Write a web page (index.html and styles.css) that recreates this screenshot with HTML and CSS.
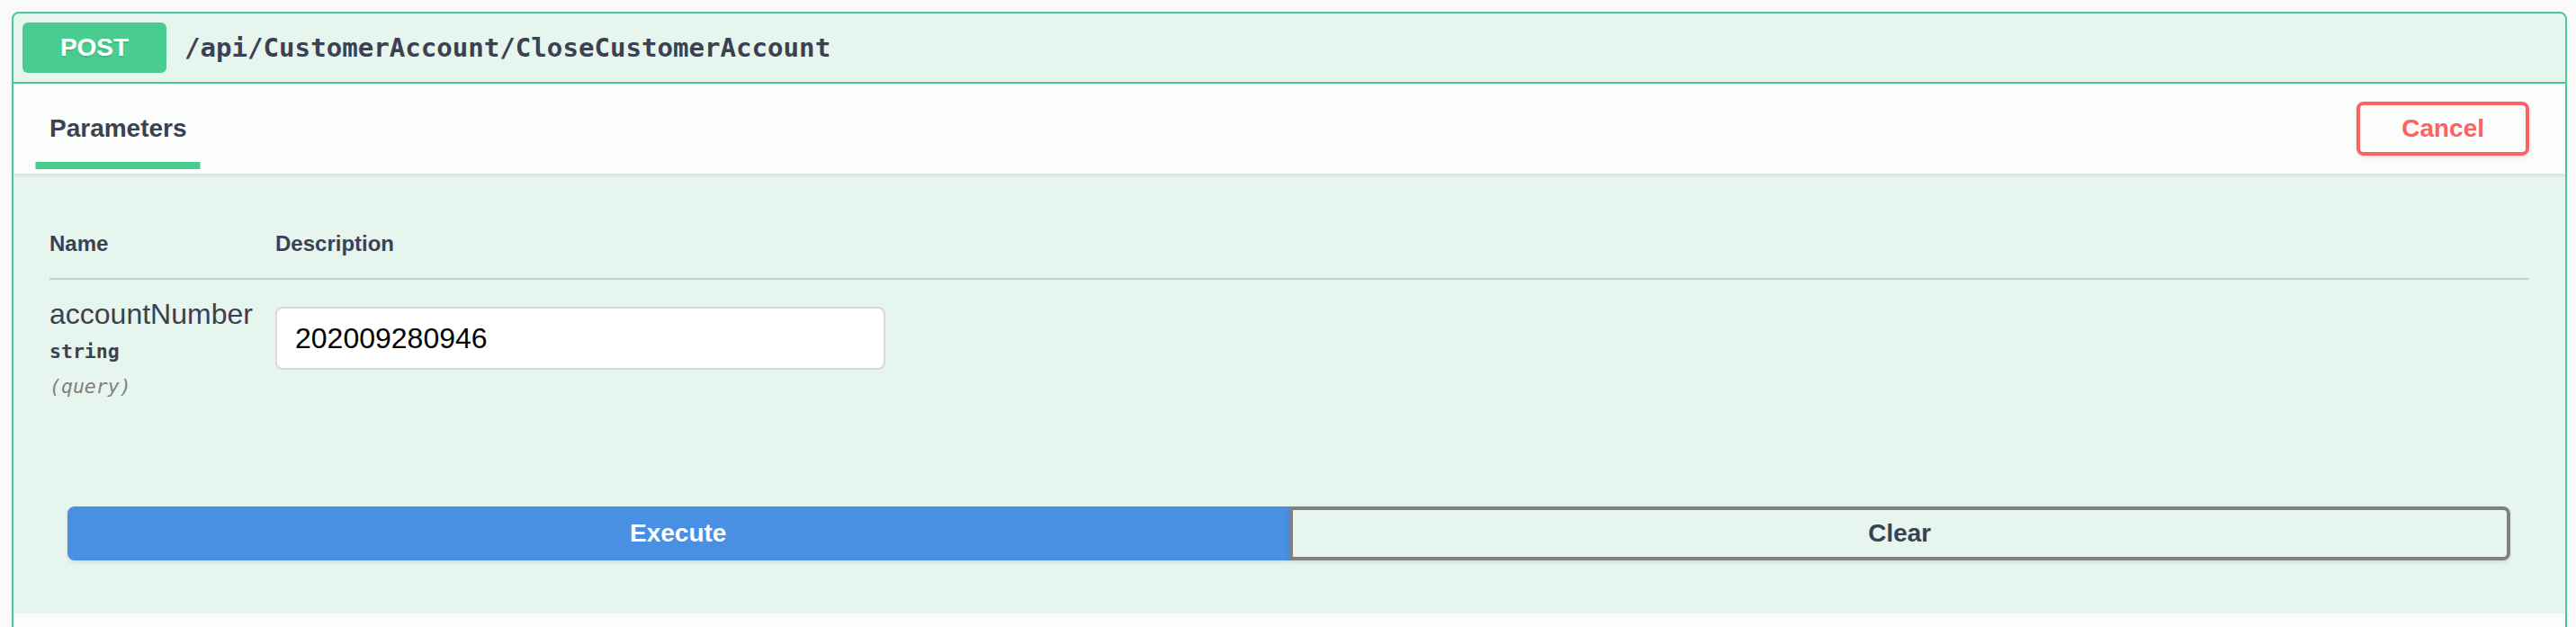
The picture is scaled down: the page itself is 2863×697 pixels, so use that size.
FILE: index.html
```html
<!DOCTYPE html>
<html lang="en">
<head>
<meta charset="utf-8">
<title>POST /api/CustomerAccount/CloseCustomerAccount</title>
<link rel="stylesheet" href="styles.css">
</head>
<body>
<div class="opblock">
  <div class="summary">
    <span class="method">POST</span>
    <span class="path">/api/CustomerAccount/CloseCustomerAccount</span>
  </div>
  <div class="section-header">
    <div class="tab-item"><span class="tab-label">Parameters</span></div>
    <button class="btn-cancel" type="button">Cancel</button>
  </div>
  <div class="table-container">
    <div class="params-head">
      <div class="col-name">Name</div>
      <div class="col-desc">Description</div>
    </div>
    <div class="params-row">
      <div class="col-name">
        <div class="param-name">accountNumber</div>
        <div class="param-type">string</div>
        <div class="param-in">(query)</div>
      </div>
      <div class="col-desc">
        <input class="param-input" type="text" value="202009280946">
      </div>
    </div>
  </div>
  <div class="btn-group">
    <button class="btn btn-execute" type="button">Execute</button>
    <button class="btn btn-clear" type="button">Clear</button>
  </div>
  <div class="section-header responses"></div>
</div>
</body>
</html>
```

FILE: styles.css
```css
html, body {
  margin: 0;
  padding: 0;
}
body {
  background: #fafafa;
  font-family: "Liberation Sans", Arial, sans-serif;
  color: #3b4151;
}
.opblock {
  margin: 13px 10px 0 13px;
  border: 2px solid #49cc90;
  border-radius: 8px;
  background: rgba(73, 204, 144, 0.1);
}
.summary {
  display: flex;
  align-items: center;
  padding: 10px;
  border-bottom: 2px solid #49cc90;
}
.method {
  width: 160px;
  height: 56px;
  display: flex;
  align-items: center;
  justify-content: center;
  background: #49cc90;
  border-radius: 6px;
  color: #fff;
  font-weight: 700;
  font-size: 28px;
  text-shadow: 0 2px 0 rgba(0, 0, 0, 0.1);
}
.path {
  padding: 0 20px;
  font-family: "DejaVu Sans Mono", monospace;
  font-weight: 700;
  font-size: 29.1px;
  color: #3b4151;
}
.section-header {
  min-height: 100px;
  box-sizing: border-box;
  padding: 0 40px;
  display: flex;
  align-items: center;
  justify-content: space-between;
  background: rgba(255, 255, 255, 0.8);
  box-shadow: 0 2px 4px rgba(0, 0, 0, 0.1);
}
.tab-item {
  position: relative;
  font-size: 28px;
  font-weight: 700;
  line-height: 32px;
}
.tab-item::after {
  content: "";
  position: absolute;
  left: 50%;
  bottom: -29px;
  width: 120%;
  height: 8px;
  transform: translateX(-50%);
  background: #49cc90;
}
.btn-cancel {
  height: 60px;
  box-sizing: border-box;
  padding: 0 46px;
  border: 4px solid #ff6060;
  border-radius: 8px;
  background: transparent;
  color: #ff6060;
  font-family: "Liberation Sans", Arial, sans-serif;
  font-size: 28px;
  font-weight: 700;
  box-shadow: 0 2px 4px rgba(0, 0, 0, 0.1);
}
.table-container {
  padding: 40px;
}
.params-head {
  display: flex;
  padding: 24px 0;
  border-bottom: 2px solid rgba(59, 65, 81, 0.2);
  font-size: 24px;
  font-weight: 700;
  line-height: 28px;
}
.col-name {
  width: 251px;
  flex: none;
}
.col-desc {
  flex: 1;
}
.params-row {
  display: flex;
  padding: 20px 0;
}
.param-name {
  font-size: 32px;
  line-height: 37px;
  color: #3b4151;
}
.param-type {
  margin-top: 10px;
  font-family: "DejaVu Sans Mono", monospace;
  font-weight: 700;
  font-size: 21.5px;
  line-height: 26px;
  color: #3b4151;
}
.param-in {
  margin-top: 13px;
  font-family: "DejaVu Sans Mono", monospace;
  font-style: italic;
  font-size: 21.5px;
  line-height: 26px;
  color: #808080;
}
.param-input {
  display: block;
  margin: 10px 0;
  width: 678px;
  height: 70px;
  box-sizing: border-box;
  padding: 0 20px;
  border: 2px solid #d9d9d9;
  border-radius: 8px;
  background: #fff;
  font-family: "Liberation Sans", Arial, sans-serif;
  font-size: 32px;
  color: #000;
  outline: none;
}
.btn-group {
  display: flex;
  padding: 60px 61px 59px 60px;
}
.btn {
  flex: 1;
  height: 60px;
  box-sizing: border-box;
  font-family: "Liberation Sans", Arial, sans-serif;
  font-size: 28px;
  font-weight: 700;
  box-shadow: 0 2px 4px rgba(0, 0, 0, 0.1);
}
.btn-execute {
  background: #4990e2;
  border: 4px solid #4990e2;
  border-radius: 8px 0 0 8px;
  color: #fff;
}
.btn-clear {
  background: transparent;
  border: 4px solid #808080;
  border-radius: 0 8px 8px 0;
  color: #3b4151;
}
```
